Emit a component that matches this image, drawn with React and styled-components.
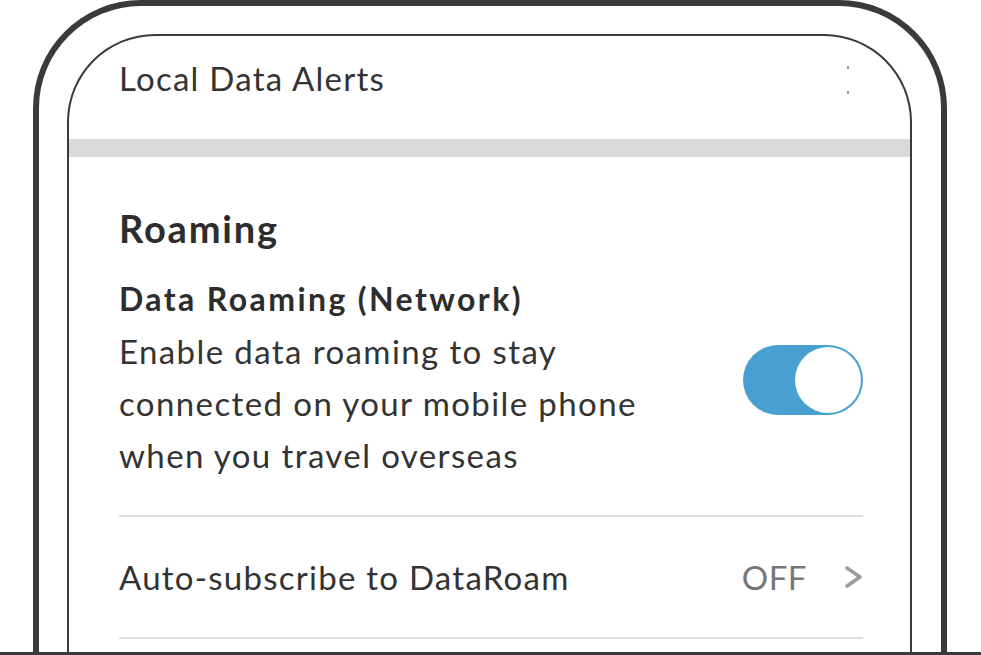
import React from "react";
import styled, { createGlobalStyle } from "styled-components";

const GlobalStyle = createGlobalStyle`
  html, body {
    margin: 0;
    padding: 0;
    background: #ffffff;
    overflow: hidden;
  }
  body {
    font-family: Lato, "Open Sans", "Liberation Sans", sans-serif;
    color: #333333;
  }
`;

const Stage = styled.div`
  width: 981px;
  height: 655px;
  display: flex;
  flex-direction: column;
  overflow: hidden;
`;

const Phone = styled.div`
  box-sizing: border-box;
  margin-left: 33px;
  width: 914px;
  height: 652px;
  border: 6px solid #3a3a3a;
  border-bottom: none;
  border-radius: 108px 108px 0 0;
  padding: 28px 29px 0 28px;
  display: flex;
  flex-direction: column;
`;

const Ground = styled.div`
  height: 3px;
  width: 100%;
  background: #3a3a3a;
`;

const Screen = styled.div`
  flex: 1;
  border: 2px solid #3a3a3a;
  border-bottom: none;
  border-radius: 88px 88px 0 0;
  overflow: hidden;
  display: flex;
  flex-direction: column;
`;

const TopRow = styled.div`
  box-sizing: border-box;
  height: 103px;
  padding: 22px 61px 0 50px;
  display: flex;
  justify-content: space-between;
  align-items: flex-start;
`;

const ItemText = styled.span`
  font-size: 33px;
  line-height: 40px;
  color: #333333;
  letter-spacing: 1.25px;
`;

const ClippedMark = styled.div`
  width: 2px;
  height: 28px;
  margin-top: 8px;
  display: flex;
  flex-direction: column;
  justify-content: space-between;
  &::before,
  &::after {
    content: "";
    display: block;
    width: 2px;
    height: 3px;
    background: #9a9a9a;
  }
`;

const Band = styled.div`
  height: 18px;
  background: #d9d9d9;
  flex-shrink: 0;
`;

const Section = styled.div`
  padding: 49px 47px 0 50px;
  display: flex;
  flex-direction: column;
`;

const SectionTitle = styled.h2`
  margin: 0;
  font-size: 38px;
  line-height: 44px;
  font-weight: 700;
  color: #2d2d2d;
  letter-spacing: 1.8px;
`;

const SettingRow = styled.div`
  display: flex;
  align-items: center;
  justify-content: space-between;
  margin-top: 29px;
  padding-bottom: 34px;
  border-bottom: 2px solid #e0e0e0;
`;

const SettingText = styled.div`
  display: flex;
  flex-direction: column;
`;

const SettingLabel = styled.div`
  font-size: 32px;
  line-height: 40px;
  font-weight: 700;
  color: #2d2d2d;
  letter-spacing: 2.4px;
`;

const SettingDesc = styled.div`
  margin-top: 6px;
  font-size: 33px;
  line-height: 52px;
  color: #333333;
  letter-spacing: 1.4px;
`;

const Toggle = styled.div`
  box-sizing: border-box;
  width: 120px;
  height: 70px;
  border-radius: 35px;
  background: ${(p) => (p.$on ? "#479fd2" : "#d0d0d0")};
  padding: 2px;
  display: flex;
  justify-content: ${(p) => (p.$on ? "flex-end" : "flex-start")};
  align-items: center;
  flex-shrink: 0;
`;

const Knob = styled.div`
  width: 66px;
  height: 66px;
  border-radius: 50%;
  background: #ffffff;
`;

const LinkRow = styled.div`
  height: 120px;
  display: flex;
  align-items: center;
  justify-content: space-between;
  border-bottom: 2px solid #e0e0e0;
`;

const Value = styled.div`
  display: flex;
  align-items: center;
  gap: 38px;
`;

const ValueText = styled.span`
  font-size: 33px;
  line-height: 40px;
  color: #777777;
  letter-spacing: 0.5px;
`;

function Chevron() {
  return (
    <svg width="18" height="22" viewBox="0 0 18 22">
      <polyline
        points="2,2 15,11 2,20"
        fill="none"
        stroke="#9b9b9b"
        strokeWidth="3.5"
        strokeLinecap="round"
        strokeLinejoin="round"
      />
    </svg>
  );
}

export default function App() {
  return (
    <Stage>
      <GlobalStyle />
      <Phone>
        <Screen>
          <TopRow>
            <ItemText>Local Data Alerts</ItemText>
            <ClippedMark />
          </TopRow>
          <Band />
          <Section>
            <SectionTitle>Roaming</SectionTitle>
            <SettingRow>
              <SettingText>
                <SettingLabel>Data Roaming (Network)</SettingLabel>
                <SettingDesc>
                  Enable data roaming to stay
                  <br />
                  connected on your mobile phone
                  <br />
                  when you travel overseas
                </SettingDesc>
              </SettingText>
              <Toggle $on>
                <Knob />
              </Toggle>
            </SettingRow>
            <LinkRow>
              <ItemText>Auto-subscribe to DataRoam</ItemText>
              <Value>
                <ValueText>OFF</ValueText>
                <Chevron />
              </Value>
            </LinkRow>
          </Section>
        </Screen>
      </Phone>
      <Ground />
    </Stage>
  );
}
